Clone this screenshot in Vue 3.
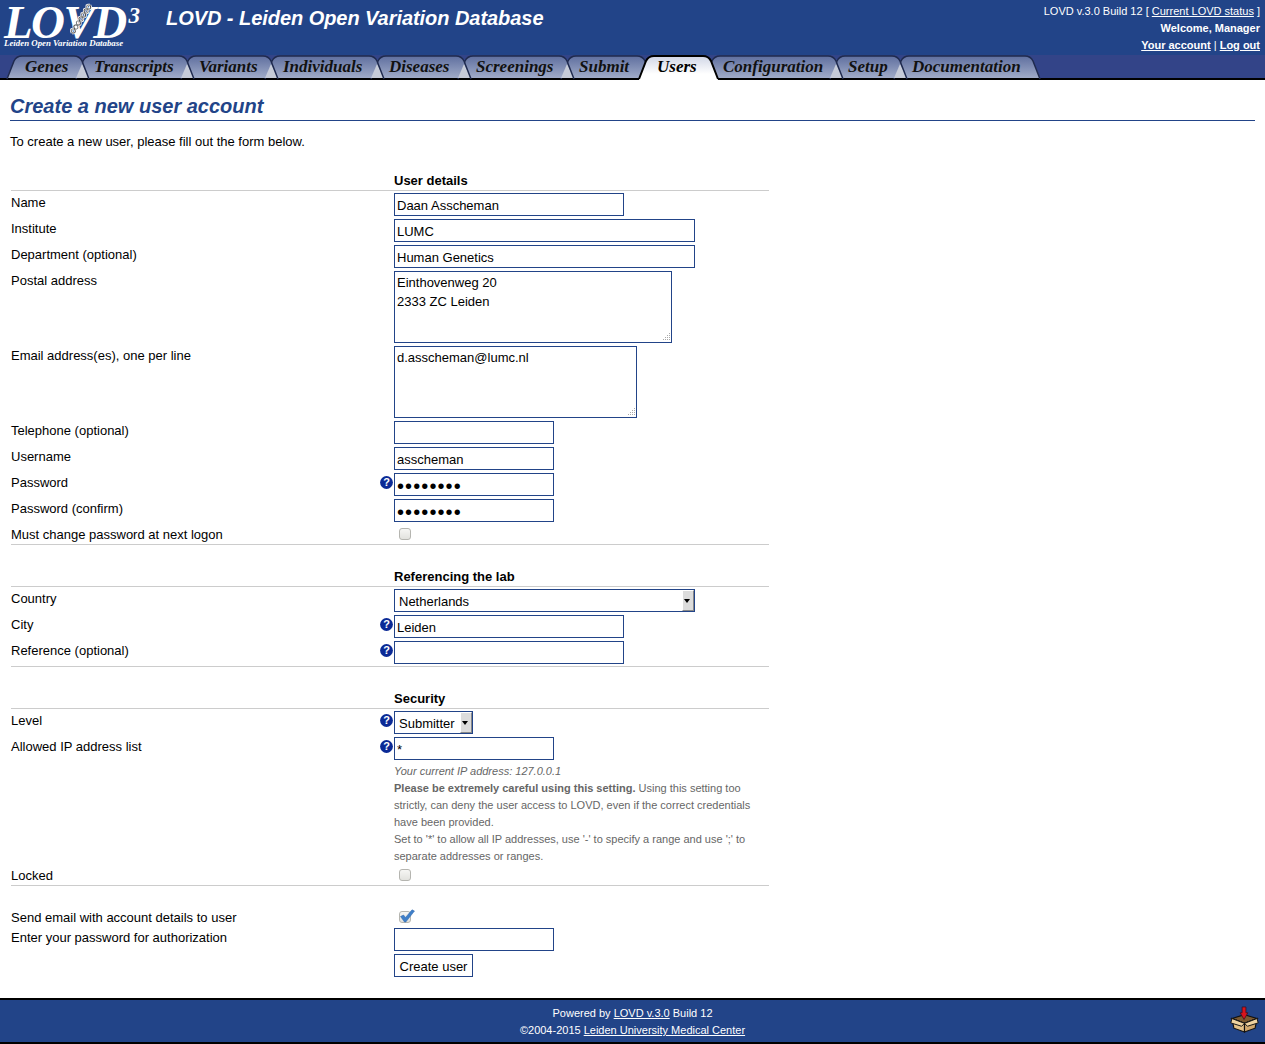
<script setup>
const tabs = [
  { label: 'Genes', pitch: 69 },
  { label: 'Transcripts', pitch: 105 },
  { label: 'Variants', pitch: 84 },
  { label: 'Individuals', pitch: 106 },
  { label: 'Diseases', pitch: 87 },
  { label: 'Screenings', pitch: 103 },
  { label: 'Submit', pitch: 78 },
  { label: 'Users', pitch: 66, active: true },
  { label: 'Configuration', pitch: 125 },
  { label: 'Setup', pitch: 64 },
  { label: 'Documentation', pitch: 133 }
]

const tabPath = (w) => `M0 23 L7 6 Q9.5 1 15 1 H${w - 15} Q${w - 9.5} 1 ${w - 7} 6 L${w} 23 Z`
const tabEdge = (w) => `M0 24 L7 6 Q9.5 1 15 1 H${w - 15} Q${w - 9.5} 1 ${w - 7} 6 L${w} 24`
const tabNotch = (w) => `M${w - 13} 23 L${w - 7} 9 L${w} 23 Z`

// strands of the little helix on the logo
const strand = (phase) => {
  let d = ''
  for (let i = 0; i <= 28; i++) {
    const t = i / 28
    const x = 72 + 18 * (1 - t)
    const y = 33 - 28 * (1 - t)
    const off = Math.sin(t * Math.PI * 7 + phase) * 2.4
    d += `${i ? 'L' : 'M'}${(x + off * 0.8).toFixed(1)} ${(y + off * 0.6).toFixed(1)} `
  }
  return d
}
</script>

<template>
  <div class="page">
    <header class="top">
      <div class="logo">
        <div class="mark">LOVD<span class="ver">3</span></div>
        <div class="sub">Leiden Open Variation Database</div>
        <svg class="helix" width="145" height="50" viewBox="0 0 145 50">
          <path :d="strand(0)" fill="none" stroke="#fff" stroke-width="2.4" />
          <path :d="strand(Math.PI)" fill="none" stroke="#fff" stroke-width="2.4" />
          <path :d="strand(0)" fill="none" stroke="#333" stroke-width="0.9" />
          <path :d="strand(Math.PI)" fill="none" stroke="#666" stroke-width="0.9" />
        </svg>
      </div>
      <h1 class="title">LOVD - Leiden Open Variation Database</h1>
      <div class="status">
        <div>LOVD v.3.0 Build 12 [ <a href="#">Current LOVD status</a> ]</div>
        <div><b>Welcome, Manager</b></div>
        <div><a href="#"><b>Your account</b></a> | <a href="#"><b>Log out</b></a></div>
      </div>
    </header>

    <nav class="tabs">
      <a
        v-for="(tab, i) in tabs"
        :key="tab.label"
        class="tab"
        :class="{ active: tab.active }"
        :style="{ width: tab.pitch + 'px', zIndex: tab.active ? 50 : tabs.length - i }"
        href="#"
      >
        <svg class="tab-bg" :width="tab.pitch + 13" height="25">
          <defs>
            <linearGradient id="tabOff" x1="0" y1="0" x2="0" y2="1">
              <stop offset="0" stop-color="#5f6f9f" />
              <stop offset="1" stop-color="#a0abc8" />
            </linearGradient>
            <linearGradient id="tabOn" x1="0" y1="0" x2="0" y2="1">
              <stop offset="0" stop-color="#d0d6e6" />
              <stop offset="0.75" stop-color="#ffffff" />
            </linearGradient>
          </defs>
          <template v-if="tab.active">
            <path :d="tabPath(tab.pitch + 13) + ' M0 23 H' + (tab.pitch + 13) + ' V25 H0 Z'" fill="url(#tabOn)" />
            <path :d="tabEdge(tab.pitch + 13)" fill="none" stroke="#000" stroke-width="2" />
          </template>
          <template v-else>
            <path :d="tabPath(tab.pitch + 13)" fill="url(#tabOff)" />
            <path v-if="i < tabs.length - 1" :d="tabNotch(tab.pitch + 13)" fill="#c6cbd8" />
            <path :d="tabEdge(tab.pitch + 13)" fill="none" stroke="#1f2a4e" stroke-width="1.5" />
          </template>
        </svg>
        <span class="tab-text">{{ tab.label }}</span>
      </a>
    </nav>

    <main class="content">
      <h2 class="heading">Create a new user account</h2>
      <p class="intro">To create a new user, please fill out the form below.</p>

      <form class="form" @submit.prevent>
        <div class="head"><span></span><span></span><b>User details</b></div>
        <div class="row">
          <label>Name</label><span></span>
          <input class="w230" type="text" value="Daan Asscheman" />
        </div>
        <div class="row">
          <label>Institute</label><span></span>
          <input class="w301" type="text" value="LUMC" />
        </div>
        <div class="row">
          <label>Department (optional)</label><span></span>
          <input class="w301" type="text" value="Human Genetics" />
        </div>
        <div class="row">
          <label>Postal address</label><span></span>
          <div class="area w278">
            <textarea>Einthovenweg 20
2333 ZC Leiden</textarea>
            <svg class="grip" width="9" height="9"><path d="M7 0h1v1H7zM5 2h1v1H5zM7 2h1v1H7zM3 4h1v1H3zM5 4h1v1H5zM7 4h1v1H7zM1 6h1v1H1zM3 6h1v1H3zM5 6h1v1H5zM7 6h1v1H7z" fill="#aaa" /></svg>
          </div>
        </div>
        <div class="row">
          <label>Email address(es), one per line</label><span></span>
          <div class="area w243">
            <textarea>d.asscheman@lumc.nl</textarea>
            <svg class="grip" width="9" height="9"><path d="M7 0h1v1H7zM5 2h1v1H5zM7 2h1v1H7zM3 4h1v1H3zM5 4h1v1H5zM7 4h1v1H7zM1 6h1v1H1zM3 6h1v1H3zM5 6h1v1H5zM7 6h1v1H7z" fill="#aaa" /></svg>
          </div>
        </div>
        <div class="row">
          <label>Telephone (optional)</label><span></span>
          <input class="w160" type="text" />
        </div>
        <div class="row">
          <label>Username</label><span></span>
          <input class="w160" type="text" value="asscheman" />
        </div>
        <div class="row">
          <label>Password</label>
          <svg class="help" width="13" height="13"><circle cx="6.5" cy="6.5" r="6.4" fill="#0b2a96" /><text x="6.5" y="10.4" text-anchor="middle">?</text></svg>
          <input class="w160 pass" type="password" value="password" />
        </div>
        <div class="row">
          <label>Password (confirm)</label><span></span>
          <input class="w160 pass" type="password" value="password" />
        </div>
        <div class="row short end">
          <label>Must change password at next logon</label><span></span>
          <span class="check"><input type="checkbox" /></span>
        </div>

        <div class="head"><span></span><span></span><b>Referencing the lab</b></div>
        <div class="row">
          <label>Country</label><span></span>
          <div class="pick w301"><select><option>Netherlands</option></select><i class="arrow"></i></div>
        </div>
        <div class="row">
          <label>City</label>
          <svg class="help" width="13" height="13"><circle cx="6.5" cy="6.5" r="6.4" fill="#0b2a96" /><text x="6.5" y="10.4" text-anchor="middle">?</text></svg>
          <input class="w230" type="text" value="Leiden" />
        </div>
        <div class="row end pad">
          <label>Reference (optional)</label>
          <svg class="help" width="13" height="13"><circle cx="6.5" cy="6.5" r="6.4" fill="#0b2a96" /><text x="6.5" y="10.4" text-anchor="middle">?</text></svg>
          <input class="w230" type="text" />
        </div>

        <div class="head"><span></span><span></span><b>Security</b></div>
        <div class="row">
          <label>Level</label>
          <svg class="help" width="13" height="13"><circle cx="6.5" cy="6.5" r="6.4" fill="#0b2a96" /><text x="6.5" y="10.4" text-anchor="middle">?</text></svg>
          <div class="pick w79"><select><option>Submitter</option></select><i class="arrow"></i></div>
        </div>
        <div class="row">
          <label>Allowed IP address list</label>
          <svg class="help" width="13" height="13"><circle cx="6.5" cy="6.5" r="6.4" fill="#0b2a96" /><text x="6.5" y="10.4" text-anchor="middle">?</text></svg>
          <input class="w160" type="text" value="*" />
        </div>
        <div class="row note">
          <span></span><span></span>
          <div class="note-text">
            <div><i>Your current IP address: 127.0.0.1</i></div>
            <div><b>Please be extremely careful using this setting.</b> Using this setting too</div>
            <div>strictly, can deny the user access to LOVD, even if the correct credentials</div>
            <div>have been provided.</div>
            <div>Set to '*' to allow all IP addresses, use '-' to specify a range and use ';' to</div>
            <div>separate addresses or ranges.</div>
          </div>
        </div>
        <div class="row short end locked">
          <label>Locked</label><span></span>
          <span class="check"><input type="checkbox" /></span>
        </div>

        <div class="row send">
          <label>Send email with account details to user</label><span></span>
          <span class="check">
            <input type="checkbox" checked />
            <svg class="tick" width="16" height="14" viewBox="0 0 16 14"><path d="M1.5 7.5 L4.5 6 L6.5 8.5 L13 0.8 L15.5 2 L6.8 13 L5.5 13 Z" fill="#3f7fc8" stroke="#2d66ad" stroke-width="0.5" /></svg>
          </span>
        </div>
        <div class="row">
          <label>Enter your password for authorization</label><span></span>
          <input class="w160" type="password" />
        </div>
        <div class="row">
          <span></span><span></span>
          <button class="submit" type="submit">Create user</button>
        </div>
      </form>
    </main>

    <footer class="foot">
      <div class="foot-text">
        <div>Powered by <a href="#">LOVD v.3.0</a> Build 12</div>
        <div>©2004-2015 <a href="#">Leiden University Medical Center</a></div>
      </div>
      <svg class="box" width="29" height="27" viewBox="0 0 30 28">
        <path d="M15 9 L28 13 L15 18 L2 13 Z" fill="#7c5a30" stroke="#111" stroke-width="1.2" />
        <path d="M2 13 L15 18 V27 L4 23 Z" fill="#e3c188" stroke="#111" stroke-width="1.2" />
        <path d="M28 13 L15 18 V27 L26 23 Z" fill="#d0a86e" stroke="#111" stroke-width="1.2" />
        <path d="M2 13 L0.8 17.5 L12 21 L15 18 Z M28 13 L29.2 17.5 L18 21 L15 18 Z" fill="#efd3a0" stroke="#111" stroke-width="1" />
        <path d="M12.5 1 H16.5 V7 H18.5 L14.5 14 L10.5 7 H12.5 Z" fill="#d8141c" stroke="#3a1020" stroke-width="0.8" />
      </svg>
    </footer>
  </div>
</template>

<style>
html, body {
  margin: 0;
  background: #fff;
}
</style>

<style scoped>
.page {
  font-family: "Liberation Sans", Arial, sans-serif;
  font-size: 13px;
  color: #000;
  min-height: 1044px;
  display: flex;
  flex-direction: column;
}

.top {
  background: #224488;
  height: 55px;
  display: flex;
  color: #fff;
}

.logo {
  width: 162px;
  padding-left: 4px;
  position: relative;
  font-family: "Liberation Serif", "Times New Roman", serif;
  font-style: italic;
}

.mark {
  font-size: 47px;
  line-height: 33px;
  height: 33px;
  padding-top: 6px;
  white-space: nowrap;
  font-weight: bold;
  letter-spacing: -1.6px;
}

.ver {
  font-size: 23px;
  vertical-align: 15px;
  line-height: 0;
  margin-left: 3px;
  letter-spacing: 0;
}

.sub {
  font-size: 8.85px;
  font-weight: bold;
  line-height: 8px;
  white-space: nowrap;
}

.helix {
  position: absolute;
  left: 0;
  top: 0;
}

.title {
  margin: 6px 0 0;
  font-size: 20px;
  line-height: 24px;
  font-style: italic;
  font-weight: bold;
  white-space: nowrap;
  letter-spacing: -0.05px;
}

.status {
  margin-left: auto;
  padding: 3px 5px 0 0;
  font-size: 11px;
  line-height: 17px;
  text-align: right;
}

.status a,
.foot a {
  color: inherit;
}

.tabs {
  background: #334488;
  height: 23px;
  border-bottom: 2px solid #000;
  padding-left: 7px;
  display: flex;
}

.tab {
  position: relative;
  display: block;
  height: 23px;
  padding-left: 18px;
  box-sizing: border-box;
  text-decoration: none;
  color: #111;
}

.tab-bg {
  position: absolute;
  left: 0;
  top: 0;
  overflow: visible;
}

.tab-text {
  position: relative;
  font-family: "Liberation Serif", "Times New Roman", serif;
  font-style: italic;
  font-weight: bold;
  font-size: 17px;
  line-height: 23px;
  white-space: nowrap;
}

.tab.active {
  color: #000;
}

.content {
  padding: 0 10px;
  flex: 1;
}

.heading {
  margin: 14px 0 0;
  height: 26px;
  font-size: 20px;
  line-height: 24px;
  font-style: italic;
  font-weight: bold;
  color: #224488;
  border-bottom: 1px solid #224488;
}

.intro {
  margin: 13px 0 0;
  line-height: 15px;
}

.form {
  width: 758px;
  margin: 24px 0 0 1px;
}

.head,
.row {
  display: grid;
  grid-template-columns: 369px 14px 1fr;
}

.head {
  line-height: 15px;
  padding-bottom: 2px;
  border-bottom: 1px solid #ccc;
}

.row {
  padding: 2px 0 1px;
  align-items: start;
}

.row > label {
  padding-top: 2px;
  line-height: 15px;
}

.row.short {
  height: 22px;
  box-sizing: border-box;
}

.row.end {
  border-bottom: 1px solid #ccc;
  margin-bottom: 24px;
}

.row.pad {
  padding-bottom: 2px;
}

.row.locked {
  margin-bottom: 20px;
}

.help {
  margin-top: 3px;
  overflow: visible;
}

.help text {
  fill: #fff;
  font-family: "Liberation Sans", Arial, sans-serif;
  font-size: 11px;
  font-weight: bold;
}

input[type="text"],
input[type="password"],
textarea,
select,
.submit {
  font-family: "Liberation Sans", Arial, sans-serif;
  font-size: 13px;
  color: #000;
  background: #fff;
  border: 1px solid #224488;
  border-radius: 0;
  box-sizing: border-box;
  outline: none;
  margin: 0;
}

input[type="text"],
input[type="password"] {
  height: 23px;
  padding: 2px 2px 0;
}

.w160 { width: 160px; }
.w230 { width: 230px; }
.w243 { width: 243px; }
.w278 { width: 278px; }
.w301 { width: 301px; }
.w79 { width: 79px; }

input.pass {
  font-size: 20px;
  letter-spacing: 1.1px;
  padding: 3px 2px 0;
}

.area {
  position: relative;
  height: 72px;
}

.area textarea {
  display: block;
  width: 100%;
  height: 72px;
  padding: 1px 2px;
  line-height: 19px;
  resize: none;
  overflow: hidden;
}

.grip {
  position: absolute;
  right: 1px;
  bottom: 1px;
}

.pick {
  position: relative;
  height: 23px;
}

.pick select {
  appearance: none;
  width: 100%;
  height: 23px;
  padding: 2px 4px 0;
}

.arrow {
  position: absolute;
  right: 1px;
  top: 1px;
  width: 12px;
  height: 21px;
  background: #dcdcdc;
  border-top: 1px solid #fff;
  border-left: 1px solid #fff;
  border-right: 1px solid #888;
  border-bottom: 1px solid #888;
  box-sizing: border-box;
}

.arrow::after {
  content: "";
  position: absolute;
  left: 1px;
  top: 8px;
  border-left: 3.5px solid transparent;
  border-right: 3.5px solid transparent;
  border-top: 4px solid #000;
}

.check {
  position: relative;
  display: block;
  width: 13px;
  height: 13px;
  margin: 3px 0 0 5px;
}

.check input {
  appearance: none;
  display: block;
  width: 12px;
  height: 12px;
  margin: 0;
  border: 1px solid #b5b5b0;
  border-radius: 3px;
  background: linear-gradient(#f6f6f4, #e2e2de);
  box-sizing: border-box;
}

.tick {
  position: absolute;
  left: 0;
  top: -2px;
}

.note {
  padding: 0;
  margin-bottom: -1px;
}

.note-text {
  font-size: 11px;
  line-height: 17px;
  color: #666;
  padding-top: 2px;
  white-space: nowrap;
}

.row.send {
  height: 20px;
  box-sizing: border-box;
}

.submit {
  width: 79px;
  height: 23px;
  padding: 2px 0 0;
}

.foot {
  background: #224488;
  border-top: 2px solid #000;
  border-bottom: 2px solid #000;
  height: 42px;
  margin-top: 20px;
  color: #fff;
  font-size: 11px;
  line-height: 17px;
  display: flex;
  justify-content: center;
  position: relative;
}

.foot-text {
  text-align: center;
  padding-top: 5px;
}

.box {
  position: absolute;
  right: 6px;
  top: 6px;
}
</style>
